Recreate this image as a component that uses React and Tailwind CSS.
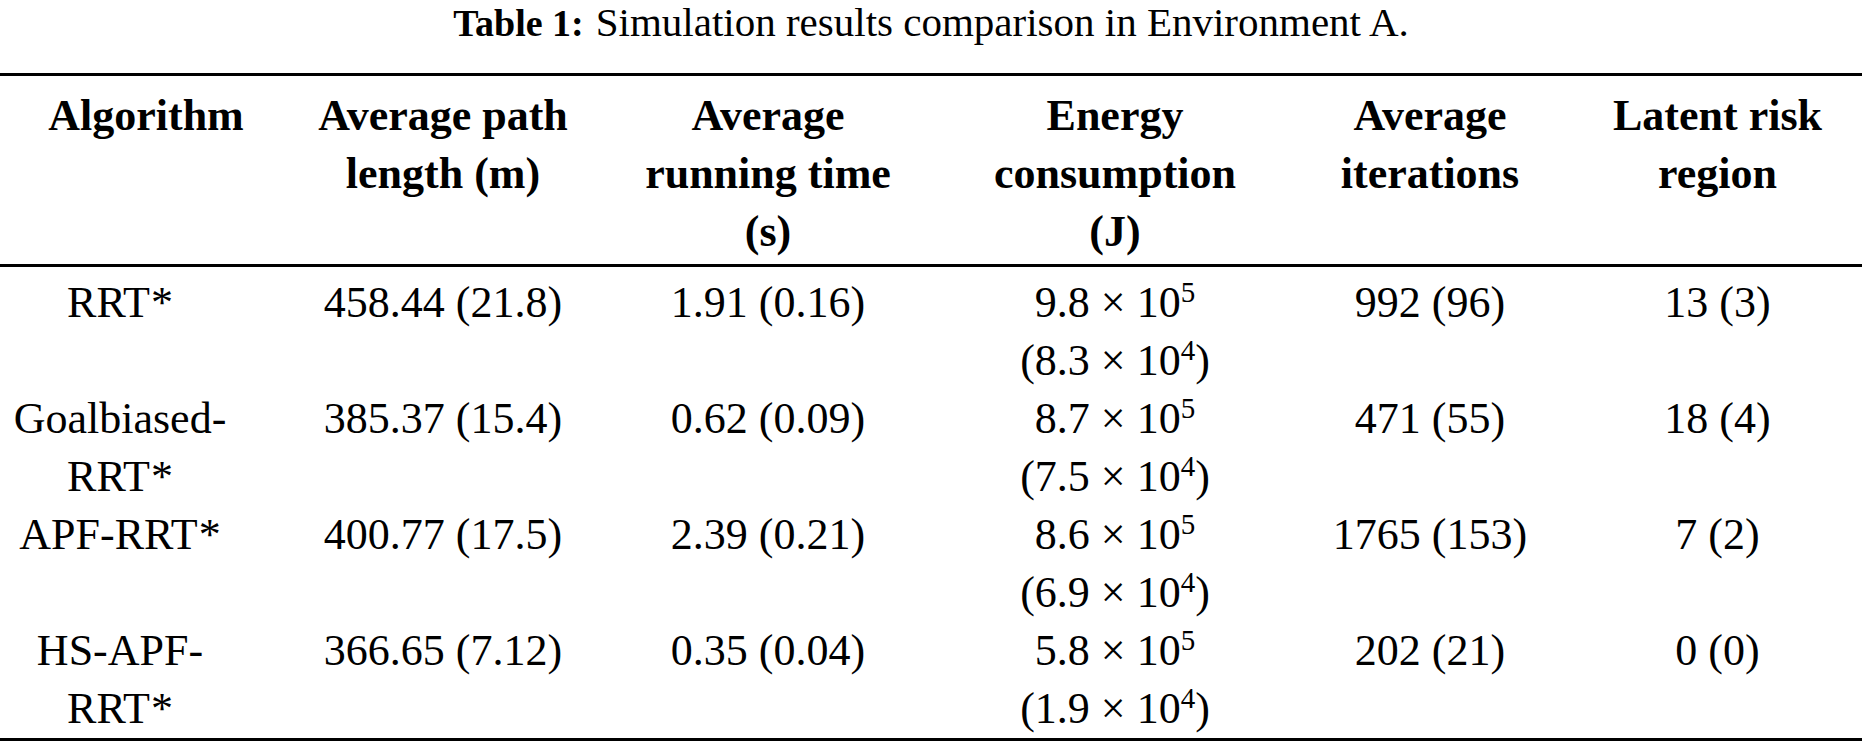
import React from "react";

const Star = () => <span className="ml-[1px]">*</span>;

const Sci = ({ m, e, paren }) => (
  <span>
    {paren ? "(" : ""}
    {m} × 10<sup className="text-[29px] -top-[15px]">{e}</sup>
    {paren ? ")" : ""}
  </span>
);

// per-column padding so the text centres line up with the reference
const colPad = ["", "", "pr-[10px]", "pl-[17px]", "pl-[15px]", ""];

const headers = [
  ["Algorithm"],
  ["Average path", "length (m)"],
  ["Average", "running time", "(s)"],
  ["Energy", "consumption", "(J)"],
  ["Average", "iterations"],
  ["Latent risk", "region"],
];

const rows = [
  {
    name: [<>RRT<Star /></>],
    path: "458.44 (21.8)",
    time: "1.91 (0.16)",
    energy: ["9.8", "5", "8.3", "4"],
    iter: "992 (96)",
    risk: "13 (3)",
  },
  {
    name: ["Goalbiased-", <>RRT<Star /></>],
    path: "385.37 (15.4)",
    time: "0.62 (0.09)",
    energy: ["8.7", "5", "7.5", "4"],
    iter: "471 (55)",
    risk: "18 (4)",
  },
  {
    name: [<>APF-RRT<Star /></>],
    path: "400.77 (17.5)",
    time: "2.39 (0.21)",
    energy: ["8.6", "5", "6.9", "4"],
    iter: "1765 (153)",
    risk: "7 (2)",
  },
  {
    name: ["HS-APF-", <>RRT<Star /></>],
    path: "366.65 (7.12)",
    time: "0.35 (0.04)",
    energy: ["5.8", "5", "1.9", "4"],
    iter: "202 (21)",
    risk: "0 (0)",
  },
];

const grid = "grid grid-cols-[281px_324px_336px_331px_301px_289px]";

export default function App() {
  return (
    <div className="w-[1862px] h-[747px] bg-white text-black font-['Liberation_Serif',serif] overflow-hidden">
      {/* Caption */}
      <p className="text-center text-[41px] leading-[44px] whitespace-nowrap">
        <span className="font-bold text-[38px]">Table 1:</span>
        <span className="ml-[12px]">Simulation results comparison in Environment A.</span>
      </p>

      <div className="mt-[28px] h-[3px] bg-black" />

      {/* Header */}
      <div className={`${grid} pt-[11px] h-[188px] text-[44px] leading-[58px] font-bold`}>
        {headers.map((lines, i) => (
          <div key={i} className={`text-center whitespace-nowrap ${i === 0 ? "pl-[11px]" : colPad[i]}`}>
            {lines.map((l, j) => (
              <div key={j}>{l}</div>
            ))}
          </div>
        ))}
      </div>

      <div className="h-[3px] bg-black" />

      {/* Body */}
      <div className="pt-[7px] text-[44px] leading-[58px]">
        {rows.map((r, i) => (
          <div key={i} className={`${grid} h-[116px]`}>
            <div className="text-center whitespace-nowrap pr-[41px]">
              {r.name.map((l, j) => (
                <div key={j}>{l}</div>
              ))}
            </div>
            <div className="text-center whitespace-nowrap">{r.path}</div>
            <div className={`text-center whitespace-nowrap ${colPad[2]}`}>{r.time}</div>
            <div className={`text-center whitespace-nowrap ${colPad[3]}`}>
              <div>
                <Sci m={r.energy[0]} e={r.energy[1]} />
              </div>
              <div>
                <Sci m={r.energy[2]} e={r.energy[3]} paren />
              </div>
            </div>
            <div className={`text-center whitespace-nowrap ${colPad[4]}`}>{r.iter}</div>
            <div className="text-center whitespace-nowrap">{r.risk}</div>
          </div>
        ))}
      </div>

      <div className="h-[3px] bg-black" />
    </div>
  );
}
